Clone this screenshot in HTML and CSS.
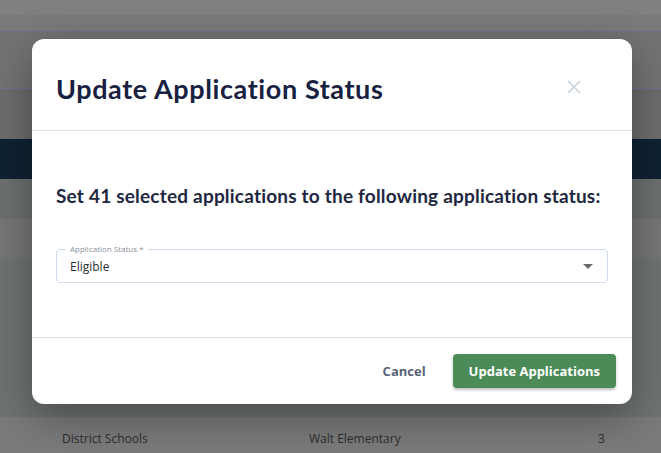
FILE: index.html
```html
<!DOCTYPE html>
<html lang="en">
<head>
    <meta charset="UTF-8">
    <meta name="viewport" content="width=device-width, initial-scale=1.0">
    <title>Update Application Status</title>
    <link rel="stylesheet" href="styles.css">
</head>
<body>

<!-- Page behind the overlay -->
<div class="page">
    <div class="topbar"></div>
    <div class="subbar"></div>
    <div class="toolbar"></div>
    <div class="filters"></div>
    <div class="table-head"></div>
    <div class="row row-a"></div>
    <div class="row row-b"></div>
    <div class="table-body"></div>
    <div class="row row-c">
        <span class="cell cell-district">District Schools</span>
        <span class="cell cell-school">Walt Elementary</span>
        <span class="cell cell-count">3</span>
    </div>
</div>

<!-- Modal -->
<div class="modal">
    <div class="modal-header">
        <h2>Update Application Status</h2>
        <button class="close-btn" aria-label="Close">
            <svg width="14" height="14" viewBox="0 0 14 14">
                <path d="M1 1 L13 13 M13 1 L1 13" stroke="#c9d4dc" stroke-width="1.6" fill="none"/>
            </svg>
        </button>
    </div>

    <div class="modal-body">
        <p class="prompt">Set 41 selected applications to the following application status:</p>

        <div class="field">
            <span class="field-label">Application Status *</span>
            <div class="select">
                <span>Eligible</span>
                <span class="caret"></span>
            </div>
        </div>
    </div>

    <div class="modal-footer">
        <button class="btn-cancel">Cancel</button>
        <button class="btn-primary">Update Applications</button>
    </div>
</div>

</body>
</html>
```

FILE: styles.css
```css
body {
    margin: 0;
    padding: 0;
    font-family: "Open Sans", "Noto Sans", sans-serif;
    background-color: #727575;
    overflow: hidden;
}
.page {
    width: 661px;
    height: 453px;
}
.topbar {
    height: 15px;
    background-color: #808080;
}
.subbar {
    height: 16px;
    background-color: #7a7a7a;
    border-bottom: 1px solid #6c7388;
}
.toolbar {
    height: 56px;
    background-color: #737373;
    border-bottom: 1px solid #6c7388;
}
.filters {
    height: 50px;
    background-color: #6c6c6c;
}
.table-head {
    height: 40px;
    background-color: #0f2233;
}
.row {
    height: 40px;
}
.row-a {
    background-color: #6c7070;
}
.row-b {
    background-color: #767676;
}
.table-body {
    height: 158px;
    background-color: #6e7272;
}
.row-c {
    height: 37px;
    background-color: #7a7a7a;
    position: relative;
    font-size: 12px;
    color: #2b2e2e;
}
.cell {
    position: absolute;
    top: 13px;
}
.cell-district { left: 62px; }
.cell-school { left: 309px; }
.cell-count { left: 598px; }

/* Modal */
.modal {
    position: absolute;
    left: 32px;
    top: 39px;
    width: 600px;
    background-color: white;
    border-radius: 12px;
    box-shadow: 0 12px 40px rgba(0, 0, 0, 0.35);
}
.modal-header {
    display: flex;
    justify-content: space-between;
    align-items: center;
    padding: 32px 24px 23px;
    border-bottom: 1px solid #dfe2e6;
}
.modal-header h2 {
    margin: 0;
    font-family: Lato, sans-serif;
    font-weight: 700;
    font-size: 27px;
    line-height: 36px;
    letter-spacing: 0.6px;
    color: #18213f;
}
.close-btn {
    background: none;
    border: none;
    padding: 0;
    margin-right: 27px;
    margin-top: -4px;
    width: 14px;
    height: 14px;
    cursor: pointer;
}
.close-btn svg {
    display: block;
}
.modal-body {
    padding: 53px 24px 54px;
    border-bottom: 1px solid #dfe2e6;
}
.prompt {
    margin: 0;
    font-family: Lato, sans-serif;
    font-weight: 700;
    font-size: 19px;
    line-height: 24px;
    letter-spacing: 0.2px;
    color: #1e2741;
}
.field {
    position: relative;
    margin-top: 41px;
}
.field-label {
    position: absolute;
    left: 10px;
    top: -6px;
    padding: 0 4px;
    background-color: white;
    font-size: 8px;
    line-height: 11px;
    color: #8a8f96;
}
.select {
    display: flex;
    justify-content: space-between;
    align-items: center;
    height: 32px;
    padding: 0 14px 0 13px;
    border: 1px solid #cfdcef;
    border-radius: 4px;
    font-size: 12px;
    color: #2a2f36;
}
.caret {
    width: 0;
    height: 0;
    border-left: 5px solid transparent;
    border-right: 5px solid transparent;
    border-top: 5px solid #6b6b6b;
}
.modal-footer {
    display: flex;
    justify-content: flex-end;
    align-items: center;
    padding: 16px 16px 16px;
}
.btn-cancel {
    background: none;
    border: none;
    padding: 8px 16px;
    margin-right: 11px;
    font-family: "Open Sans", sans-serif;
    font-weight: 700;
    font-size: 13px;
    color: #5b6379;
    cursor: pointer;
}
.btn-primary {
    height: 34px;
    padding: 0 16px;
    background-color: #4a8b58;
    color: white;
    border: none;
    border-radius: 4px;
    font-family: "Open Sans", sans-serif;
    font-weight: 700;
    font-size: 13px;
    box-shadow: 0 2px 3px rgba(0, 0, 0, 0.25);
    cursor: pointer;
}
```
